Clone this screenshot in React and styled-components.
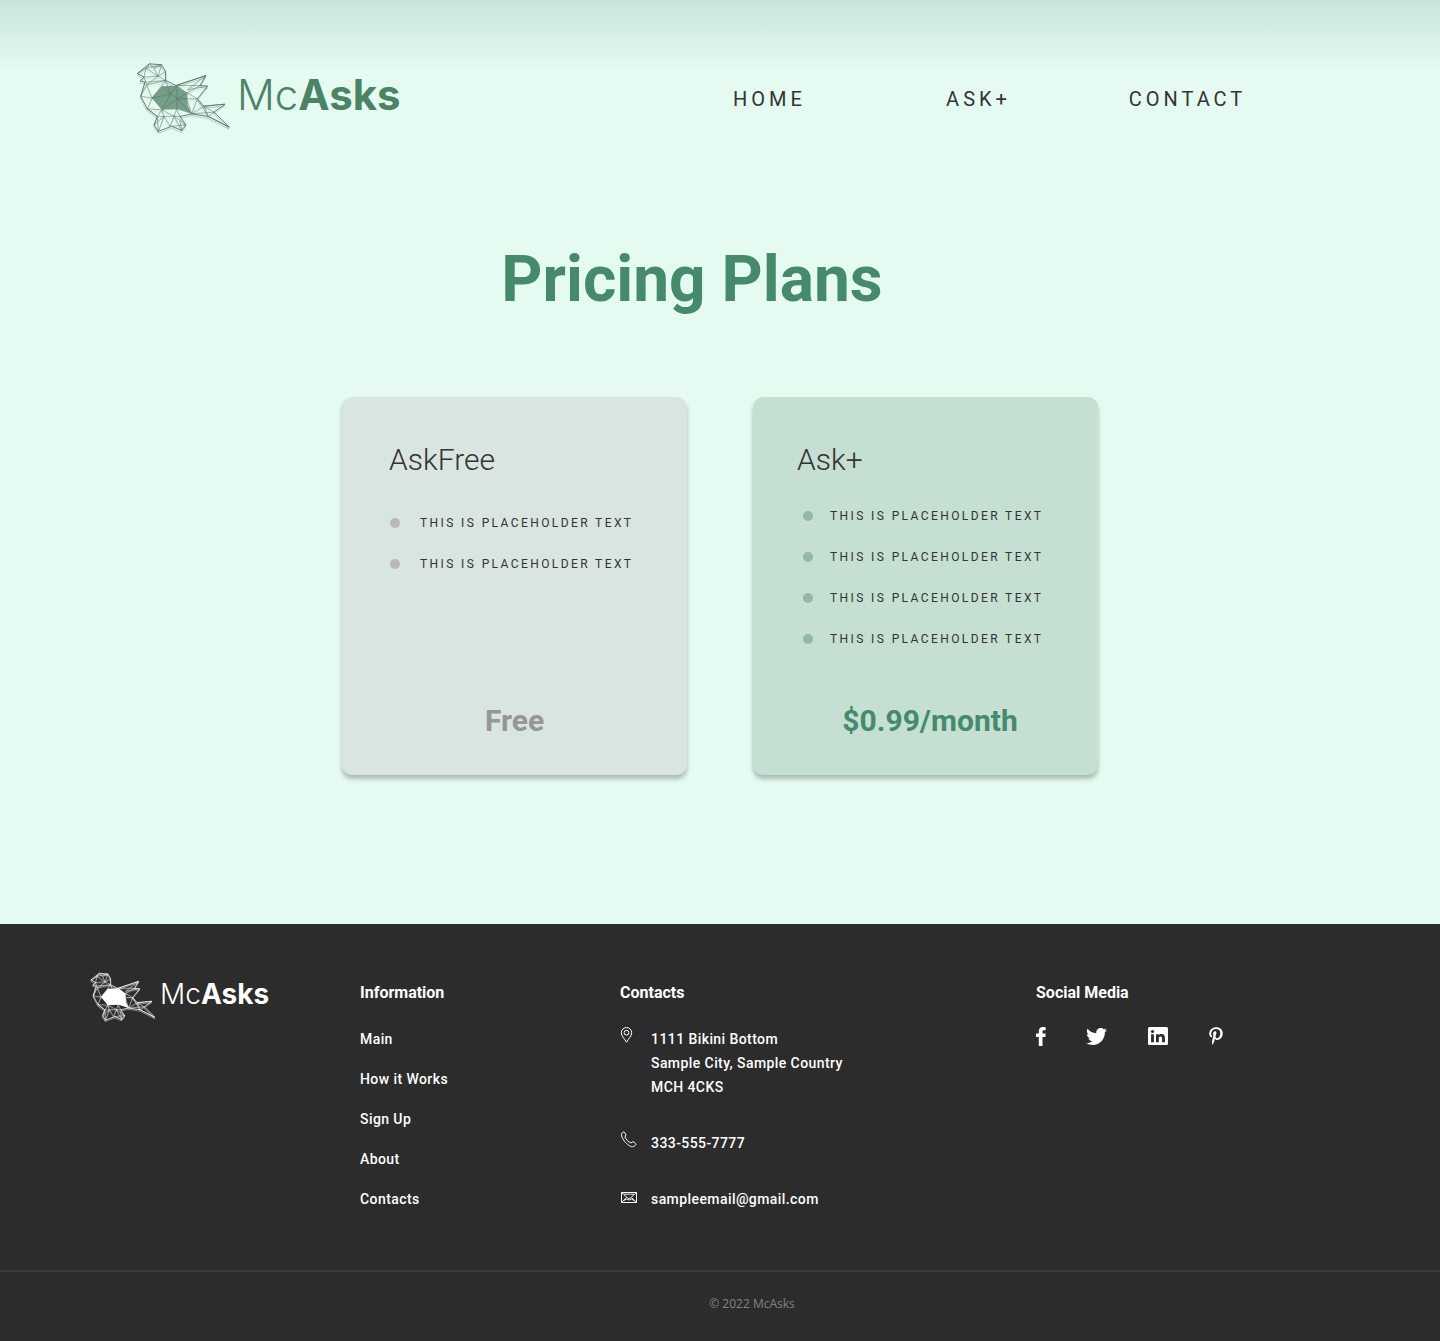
import React from "react";
import styled, { createGlobalStyle } from "styled-components";
import { FaTwitter, FaPinterestP } from "react-icons/fa";

const GlobalStyle = createGlobalStyle`
  *, *::before, *::after { box-sizing: border-box; }
  body {
    margin: 0;
    background: #e5faf1;
    color: #333;
    font-family: Roboto, "Liberation Sans", sans-serif;
  }
  h1, h2, p, ul, address { margin: 0; padding: 0; font-style: normal; }
  ul { list-style: none; }
  a { color: inherit; text-decoration: none; }
  svg { display: block; flex: none; }
`;

const Page = styled.div`
  background: linear-gradient(#c9e5d9, #e5faf1 70px);
`;

const Header = styled.header`
  display: flex;
  align-items: center;
  justify-content: space-between;
  padding: 62px 148px 0 136px;
`;

const Brand = styled.a`
  display: flex;
  align-items: center;
  align-self: start;
  justify-self: start;
  gap: ${(p) => (p.$small ? 4 : 6)}px;
  color: ${(p) => p.$color};
`;

const Wordmark = styled.span`
  font-family: Inter, sans-serif;
  font-size: ${(p) => (p.$small ? 28 : 42)}px;
  line-height: ${(p) => (p.$small ? 44 : 66)}px;
  font-weight: 300;
  align-self: flex-start;

  strong { font-weight: 700; }
`;

const Nav = styled.nav`
  display: grid;
  grid-template-columns: repeat(3, 209px);
  justify-items: center;
`;

const NavLink = styled.a`
  font-size: 20px;
  line-height: 26px;
  letter-spacing: 4px;
  padding-top: 2px;
`;

const Main = styled.main`
  padding: 108px 24px 149px;
`;

const Title = styled.h1`
  padding-right: 56px;
  color: #458b6b;
  font-size: 64px;
  font-weight: 700;
  line-height: 76px;
  text-align: center;
`;

const Plans = styled.div`
  display: grid;
  grid-template-columns: repeat(2, 345px);
  justify-content: center;
  gap: 66px;
  margin-top: 79px;
`;

const Card = styled.section`
  display: flex;
  flex-direction: column;
  min-height: 378px;
  padding: ${(p) => (p.$plus ? "45px 35px 36px 44px" : "45px 47px 36px")};
  border-radius: 10px;
  background: ${(p) => (p.$plus ? "#c5dfd2" : "#d9e5e0")};
  box-shadow: 0 4px 4px rgba(0, 0, 0, 0.25);
`;

const PlanName = styled.h2`
  font-size: 30px;
  font-weight: 300;
  line-height: 36px;
`;

const Features = styled.ul`
  margin-top: ${(p) => (p.$plus ? 17 : 24)}px;
  padding-left: ${(p) => (p.$plus ? 6 : 1)}px;
`;

const Feature = styled.li`
  display: flex;
  align-items: center;
  gap: ${(p) => (p.$plus ? 17 : 20)}px;
  height: 41px;
  font-size: 12px;
  letter-spacing: 0.2em;
  white-space: nowrap;

  &::before {
    content: "";
    width: 10px;
    height: 10px;
    border-radius: 50%;
    background: ${(p) => (p.$plus ? "#92b9a6" : "#b8b8b8")};
  }
`;

const Price = styled.p`
  margin-top: auto;
  color: ${(p) => (p.$plus ? "#458b6b" : "#969696")};
  font-size: 30px;
  font-weight: 700;
  line-height: 36px;
  text-align: center;
`;

const Footer = styled.footer`
  background: #2c2c2c;
  color: #fff;
`;

const FooterGrid = styled.div`
  display: grid;
  grid-template-columns: 270fr 260fr 416fr 314fr;
  padding: 48px 90px 59px;
`;

const Column = styled.section`
  padding-top: 9px;
`;

const ColumnTitle = styled.h2`
  margin-bottom: 22px;
  font-size: 16px;
  font-weight: 700;
  line-height: 24px;
`;

const FooterList = styled.ul`
  display: grid;
  gap: ${(p) => p.$gap}px;
  font-size: 14px;
  font-weight: 500;
  letter-spacing: 0.03em;
  line-height: 24px;
`;

const ContactItem = styled.li`
  display: grid;
  grid-template-columns: 31px 1fr;
`;

const Social = styled.div`
  display: flex;
  align-items: center;
  gap: 41px;
  height: 18px;
`;

const SocialLink = styled.a`
  width: ${(p) => p.$width}px;
  display: flex;
  justify-content: center;
`;

const Legal = styled.p`
  padding: 22px 0 27px 64px;
  border-top: 2px solid #3b3b3b;
  color: #828282;
  font-family: "Open Sans", sans-serif;
  font-size: 12px;
  line-height: 20px;
  text-align: center;
`;

const BIRD_OUTLINE =
  "M22 54L58 25L95 28L107 48L107 75L138 90L228 60L210 90L233 92L202 130L222 152L285 146L252 170L298 215L235 183L185 175L150 183L168 208L155 225L125 212L85 228L72 208L82 183L52 160L32 122L45 80L30 76L42 65Z";
const BIRD_MESH =
  "M22 54L48 38L95 28M58 25L48 38L42 65L84 62L107 48M48 38L84 62L72 38L58 25M72 38L95 28L84 62L107 75M42 65L50 88L84 62M45 80L107 75L50 88L66 128L107 75M50 88L32 122L66 128L52 160L95 163L82 183L52 160M66 128L97 92L122 116L140 90L142 130L172 112M66 128L122 116L95 163L142 130L140 160M107 75L122 116L142 130L185 175M140 90L210 90M140 90L228 60L172 103L233 92M172 112L202 130L142 130M172 112L210 90M202 130L185 175L172 135M202 130L235 183L222 152L252 170L235 183M185 175L222 152M252 170L185 175M222 152L285 146M235 183L298 215M95 163L102 183L82 183L85 228L102 183L120 212L132 182L102 183L72 208M140 160L132 182L95 163M140 160L150 183L132 182L155 225L150 195M132 182L168 208L125 212";
const BIRD_BODY = "M66 128L97 92L140 90L172 112L173 150L185 175L142 161L95 163Z";

function Bird({ light }) {
  return (
    <svg
      width={light ? 66 : 95}
      height={light ? 50 : 72}
      viewBox="18 20 285 215"
      fill="none"
      strokeLinejoin="round"
      aria-hidden="true"
    >
      <g transform="translate(-1 6)" stroke={light ? "#fff" : "#458b6b"} strokeWidth="2" opacity={light ? 0.8 : 0.5}>
        <path d={BIRD_OUTLINE} />
        <path d={BIRD_MESH} opacity="0.3" />
      </g>
      <path d={BIRD_BODY} fill={light ? "#fff" : "#769f8a"} />
      <g stroke={light ? "#fff" : "#56665e"}>
        <path d={BIRD_OUTLINE} strokeWidth={light ? 4 : 3} opacity="0.85" />
        <path d={BIRD_MESH} strokeWidth={light ? 3 : 2} opacity="0.75" />
      </g>
    </svg>
  );
}

function Logo({ light }) {
  return (
    <Brand href="#" $small={light} $color={light ? "#fff" : "#4b8465"}>
      <Bird light={light} />
      <Wordmark $small={light}>
        Mc<strong>Asks</strong>
      </Wordmark>
    </Brand>
  );
}

const iconProps = { width: 17, height: 17, viewBox: "0 0 17 17", fill: "none", stroke: "#fff", strokeLinejoin: "round", "aria-hidden": true };

const PinIcon = () => (
  <svg {...iconProps}>
    <path d="M6.5 15.2C4.5 11.7 1.3 9 1.3 5.7a5.2 5.2 0 0 1 10.4 0C11.7 9 8.5 11.7 6.5 15.2Z" />
    <circle cx="6.5" cy="5.7" r="2.4" />
  </svg>
);

const PhoneIcon = () => (
  <svg {...iconProps}>
    <path d="M3.8.8 1.7 2.3C.5 5.4 4.2 10.3 6.6 12.5C9.2 14.9 11.8 16.6 14.3 15.2L16 13.3C15.600 12 14.200 11.200 12.900 10.700L10.900 12C8.600 11.200 5.900 8.300 5 6.100L5.900 4C5.600 2.700 5 1.400 3.800.8Z" />
  </svg>
);

const MailIcon = () => (
  <svg {...iconProps}>
    <path d="M1.500 5.500h15v10h-15z" />
    <path d="M1.500 5.500l6 5.500q1.500 1 3 0l6-5.500M1.500 15.500l5-5M16.500 15.500l-5-5M4 13.500l2.500-1.500q2.500 2 5 0l2.500 1.500M4 7.200h10" strokeWidth="0.9" />
  </svg>
);

const FacebookIcon = () => (
  <svg width="10" height="19" viewBox="0 0 10 19" fill="#fff" aria-hidden="true">
    <path d="M9.700.2v3.100H7.900C6.800 3.300 6.500 3.900 6.500 4.700V6.600H9.700L9.300 9.900H6.500V19H2.800V9.900H0V6.600H2.800V4.200C2.800 1.500 4.500 0 7 0C8.200 0 9.300.1 9.700.2Z" />
  </svg>
);

const LinkedinIcon = () => (
  <svg width="20" height="18" viewBox="0 0 20 18" aria-hidden="true">
    <rect width="20" height="18" rx="1.500" fill="#fff" />
    <g fill="#2c2c2c">
      <circle cx="4.500" cy="4.500" r="1.600" />
      <path d="M3.100 7.200h2.800v8H3.100zM8 7.200h2.700v1.100c.5-.8 1.400-1.300 2.700-1.300 2.600 0 3.500 1.500 3.500 4v4.200h-2.800v-3.800c0-1.200-.4-2-1.500-2-1.200 0-1.800.8-1.800 2v3.800H8z" />
    </g>
  </svg>
);

const LINE = "THIS IS PLACEHOLDER TEXT";

function Plan({ name, price, features, plus }) {
  return (
    <Card $plus={plus}>
      <PlanName>{name}</PlanName>
      <Features $plus={plus}>
        {features.map((text, i) => (
          <Feature key={i} $plus={plus}>{text}</Feature>
        ))}
      </Features>
      <Price $plus={plus}>{price}</Price>
    </Card>
  );
}

export default function App() {
  return (
    <Page>
      <GlobalStyle />
      <Header>
        <Logo />
        <Nav>
          <NavLink href="#">HOME</NavLink>
          <NavLink href="#">ASK+</NavLink>
          <NavLink href="#">CONTACT</NavLink>
        </Nav>
      </Header>
      <Main>
        <Title>Pricing Plans</Title>
        <Plans>
          <Plan name="AskFree" price="Free" features={[LINE, LINE]} />
          <Plan name="Ask+" price="$0.99/month" features={[LINE, LINE, LINE, LINE]} plus />
        </Plans>
      </Main>
      <Footer>
        <FooterGrid>
          <Logo light />
          <Column>
            <ColumnTitle>Information</ColumnTitle>
            <FooterList $gap={16}>
              {["Main", "How it Works", "Sign Up", "About", "Contacts"].map((label) => (
                <li key={label}><a href="#">{label}</a></li>
              ))}
            </FooterList>
          </Column>
          <Column>
            <ColumnTitle>Contacts</ColumnTitle>
            <FooterList $gap={32}>
              <ContactItem>
                <PinIcon />
                <address>1111 Bikini Bottom<br />Sample City, Sample Country<br />MCH 4CKS</address>
              </ContactItem>
              <ContactItem>
                <PhoneIcon />
                <a href="tel:3335557777">333-555-7777</a>
              </ContactItem>
              <ContactItem>
                <MailIcon />
                <a href="mailto:sampleemail@gmail.com">sampleemail@gmail.com</a>
              </ContactItem>
            </FooterList>
          </Column>
          <Column>
            <ColumnTitle>Social Media</ColumnTitle>
            <Social>
              <SocialLink href="#" aria-label="Facebook" $width={9}><FacebookIcon /></SocialLink>
              <SocialLink href="#" aria-label="Twitter" $width={21}><FaTwitter size={21} /></SocialLink>
              <SocialLink href="#" aria-label="LinkedIn" $width={20}><LinkedinIcon /></SocialLink>
              <SocialLink href="#" aria-label="Pinterest" $width={14}><FaPinterestP size={18} /></SocialLink>
            </Social>
          </Column>
        </FooterGrid>
        <Legal>© 2022 McAsks</Legal>
      </Footer>
    </Page>
  );
}
